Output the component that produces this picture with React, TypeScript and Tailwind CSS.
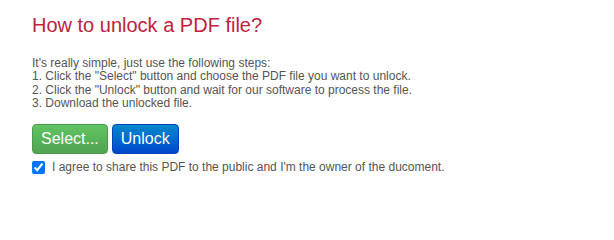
export default function App() {
  return (
    <div className="w-[614px] h-[202px] bg-white pl-8 pt-[14px] font-['Liberation_Sans',Arial,sans-serif]">
      <h1 className="text-[20px] leading-[22px] text-[#c0223f]">How to unlock a PDF file?</h1>

      <div className="mt-[21px] text-[12px] leading-[13.33px] text-[#555]">
        <p>It's really simple, just use the following steps:</p>
        <p>1. Click the "Select" button and choose the PDF file you want to unlock.</p>
        <p>2. Click the "Unlock" button and wait for our software to process the file.</p>
        <p>3. Download the unlocked file.</p>
      </div>

      <div className="mt-[14px] flex gap-1">
        <button className="h-[30px] px-[8px] rounded-[4px] border border-[#4a9a4a] bg-gradient-to-b from-[#62c462] to-[#51a351] text-[16px] text-white">
          Select...
        </button>
        <button className="h-[30px] px-[8px] rounded-[4px] border border-[#0045b8] bg-gradient-to-b from-[#0088cc] to-[#0044cc] text-[16px] text-white">
          Unlock
        </button>
      </div>

      <label className="mt-[4px] flex items-center gap-[7px] text-[12px] text-[#555]">
        <input type="checkbox" defaultChecked className="m-0 w-[13px] h-[13px] accent-[#0075ff]" />
        <span>I agree to share this PDF to the public and I'm the owner of the ducoment.</span>
      </label>
    </div>
  );
}
